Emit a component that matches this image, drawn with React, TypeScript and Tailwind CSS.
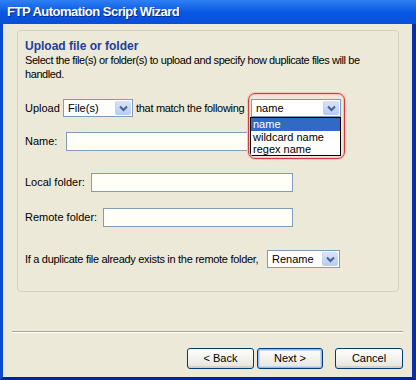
import React from 'react';

const font = { fontFamily: '"Liberation Sans", Arial, sans-serif' };

function Arrow() {
  return (
    <div className="w-[16px] h-full flex items-center justify-center bg-gradient-to-b from-[#d8e4fc] to-[#b6cbf6] border-l border-[#bcd0f4] rounded-[2px]">
      <svg width="9" height="7" viewBox="0 0 9 7">
        <path d="M1 1.5 L4.5 5 L8 1.5" fill="none" stroke="#4d6185" strokeWidth="2" />
      </svg>
    </div>
  );
}

function Combo({ value, w }: { value: string; w: string }) {
  return (
    <div className={`${w} h-[18px] flex items-stretch border border-[#7f9db9] bg-white p-[1px]`}>
      <span className="flex-1 pl-[3px] leading-[14px]">{value}</span>
      <Arrow />
    </div>
  );
}

function Field({ w }: { w: string }) {
  return <div className={`${w} h-[19px] border border-[#7f9db9] bg-[#fffff8]`} />;
}

function Btn({ label, main }: { label: string; main?: boolean }) {
  return (
    <div className={`h-[21px] flex items-center justify-center rounded-[3px] border border-[#003c74] bg-gradient-to-b from-white to-[#e6e4dc] ${main ? 'shadow-[inset_0_0_0_1px_#97b8f0,inset_0_0_0_2px_#c6d8f8]' : 'shadow-[inset_0_-2px_0_#d6d0c5]'}`}>
      {label}
    </div>
  );
}

export default function App() {
  return (
    <div className="w-[416px] h-[380px] flex flex-col bg-[#0842c6] text-[11px] text-black" style={font}>
      {/* barra de título */}
      <div className="h-[24px] shrink-0 flex items-center pl-[7px] bg-gradient-to-b from-[#2f80f4] via-[#0858e4] to-[#0a4fd6]">
        <span className="text-white font-bold text-[13px] tracking-[-0.5px] [text-shadow:1px_1px_0_#0a2a80]">FTP Automation Script Wizard</span>
      </div>

      <div className="flex-1 flex border-l-[3px] border-l-[#0a4ad0] border-r-[4px] border-r-[#0a2ea8] border-b-[3px] border-b-[#00229a]">
        <div className="flex-1 flex flex-col bg-[#ece9d8] relative">
          {/* grupo */}
          <div className="mt-[6px] ml-[14px] w-[382px] h-[262px] border border-[#d0d0bf] rounded-[4px] px-[7px] pt-[8px] flex flex-col">
            <div className="h-[14px] leading-[14px] font-bold text-[#1f3f98] text-[12px]">Upload file or folder</div>
            <div className="leading-[14px] tracking-[-0.42px]">
              Select the file(s) or folder(s) to upload and specify how duplicate files will be<br />handled.
            </div>

            <div className="mt-[18px] h-[18px] flex items-center">
              <span className="w-[38px]">Upload</span>
              <Combo value="File(s)" w="w-[70px]" />
              <span className="ml-[3px] w-[115px] tracking-[-0.3px]">that match the following</span>
              <Combo value="name" w="w-[90px]" />
            </div>

            <div className="mt-[15px] flex items-center">
              <span className="w-[41px]">Name:</span>
              <Field w="w-[228px]" />
            </div>

            <div className="mt-[22px] flex items-center">
              <span className="w-[66px]">Local folder:</span>
              <Field w="w-[202px]" />
            </div>

            <div className="mt-[16px] flex items-center">
              <span className="w-[78px]">Remote folder:</span>
              <Field w="w-[190px]" />
            </div>

            <div className="mt-[23px] flex items-center">
              <span className="w-[242px] tracking-[-0.3px]">If a duplicate file already exists in the remote folder,</span>
              <Combo value="Rename" w="w-[73px]" />
            </div>
          </div>

          {/* separador */}
          <div className="mt-[39px] mx-[9px] h-[2px] border-t border-[#aca899] border-b border-b-white" />

          <div className="mt-[15px] flex justify-end pr-[9px]">
            <div className="w-[67px]"><Btn label="< Back" /></div>
            <div className="w-[66px] ml-[3px]"><Btn label="Next >" main /></div>
            <div className="w-[68px] ml-[12px]"><Btn label="Cancel" /></div>
          </div>

          {/* lista desplegable abierta */}
          <div className="absolute left-[247px] top-[93px] w-[91px] bg-white border border-black leading-[12px] text-[11px]">
            <div className="h-[13px] bg-[#316ac5] text-white pl-[2px]">name</div>
            <div className="h-[12px] pl-[2px]">wildcard name</div>
            <div className="h-[12px] pl-[2px]">regex name</div>
          </div>
          <div className="absolute left-[245px] top-[69px] w-[97px] h-[66px] rounded-[7px] border border-[#d43c3c] shadow-[0_0_0_1px_#f3c4c0,inset_0_0_0_1px_#f3c4c0]" />
        </div>
      </div>
    </div>
  );
}
